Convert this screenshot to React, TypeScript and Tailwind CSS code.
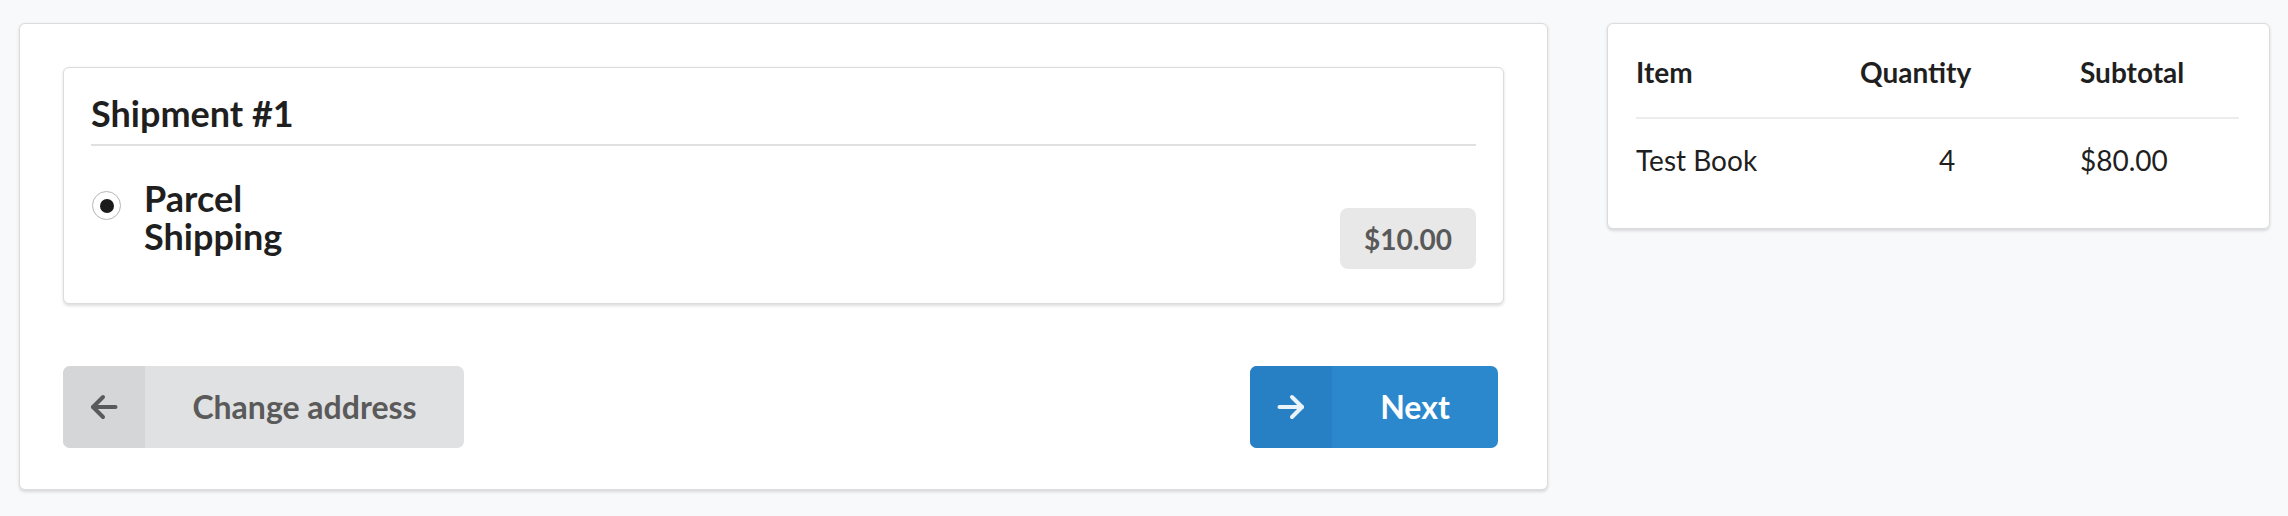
import { JSX } from "react";

// Shipping step of the checkout: shipment options on the left, cart summary on the right

interface CartLine {
  name: string;
  quantity: number;
  subtotal: string;
}

const cartLines: CartLine[] = [{ name: "Test Book", quantity: 4, subtotal: "$80.00" }];

function ArrowLeft({ className }: { className?: string }): JSX.Element {
  return (
    <svg viewBox="0 0 28 28" className={className} fill="none" stroke="currentColor" strokeWidth={4} strokeLinecap="round" strokeLinejoin="round">
      <path d="M25.5 14H3" />
      <path d="M13 4 3 14l10 10" />
    </svg>
  );
}

function ArrowRight({ className }: { className?: string }): JSX.Element {
  return (
    <svg viewBox="0 0 28 28" className={className} fill="none" stroke="currentColor" strokeWidth={4} strokeLinecap="round" strokeLinejoin="round">
      <path d="M2.5 14H25" />
      <path d="M15 4l10 10-10 10" />
    </svg>
  );
}

export default function App(): JSX.Element {
  return (
    <div className="min-h-screen bg-[#f8f9fa] font-['Lato','Noto_Sans',sans-serif] text-[#1f1f1f] flex items-start gap-[59px] pl-[19px] pr-[18px] pt-[23px]">
      {/* Shipment panel */}
      <div className="w-[1529px] bg-white border border-[#dcdcdd] rounded-[6px] shadow-[0_1.5px_3px_rgba(34,36,38,0.15)] pt-[43px] pb-[41px] px-[43px]">
        <div className="bg-white border border-[#dcdcdd] rounded-[6px] shadow-[0_1.5px_3px_rgba(34,36,38,0.15)] pt-[24px] pb-[34px] px-[27px]">
          <h3 className="text-[36px] leading-[43px] font-bold pb-[9px]">Shipment #1</h3>
          <div className="h-[2px] bg-[#e0e0e0]" />
          <div className="flex items-start justify-between mt-[33px]">
            <label className="flex items-start gap-[23px]">
              <span className="mt-[12px] ml-[1px] w-[29px] h-[29px] rounded-full border-[1.5px] border-[#b5b5b5] bg-white flex items-center justify-center">
                <span className="w-[14px] h-[14px] rounded-full bg-[#1b1b1b]" />
              </span>
              <span className="w-[160px] text-[36px] leading-[38px] font-bold">Parcel Shipping</span>
            </label>
            <span className="mt-[29px] w-[136px] h-[61px] rounded-[8px] bg-[#e8e8e8] text-[#595959] text-[28px] font-bold flex items-center justify-center">
              $10.00
            </span>
          </div>
        </div>

        {/* Navigation buttons */}
        <div className="flex justify-between items-center mt-[62px] pr-[6px]">
          <button className="w-[401px] h-[82px] rounded-[7px] bg-[#e0e1e2] text-[#5a5a5a] flex overflow-hidden">
            <span className="w-[82px] h-full bg-[#d5d6d8] flex items-center justify-center">
              <ArrowLeft className="w-[28px] h-[28px]" />
            </span>
            <span className="flex-1 flex items-center justify-center text-[32px] font-bold">Change address</span>
          </button>
          <button className="w-[248px] h-[82px] rounded-[7px] bg-[#2b88cd] text-white flex overflow-hidden">
            <span className="w-[82px] h-full bg-[#2780c3] text-[#eaf2fa] flex items-center justify-center">
              <ArrowRight className="w-[28px] h-[28px]" />
            </span>
            <span className="flex-1 flex items-center justify-center text-[32px] font-bold">Next</span>
          </button>
        </div>
      </div>

      {/* Cart summary */}
      <div className="w-[663px] bg-white border border-[#dcdcdd] rounded-[6px] shadow-[0_1.5px_3px_rgba(34,36,38,0.15)] pt-[31px] pb-[51px] pl-[28px] pr-[30px]">
        <div className="grid grid-cols-[224px_220px_1fr] text-[28px] leading-[34px] font-bold pb-[28px] border-b-[2px] border-[#ececec]">
          <span>Item</span>
          <span>Quantity</span>
          <span>Subtotal</span>
        </div>
        {cartLines.map((line) => (
          <div key={line.name} className="grid grid-cols-[224px_220px_1fr] text-[28px] leading-[34px] pt-[24px]">
            <span>{line.name}</span>
            <span className="pl-[79px]">{line.quantity}</span>
            <span>{line.subtotal}</span>
          </div>
        ))}
      </div>
    </div>
  );
}
